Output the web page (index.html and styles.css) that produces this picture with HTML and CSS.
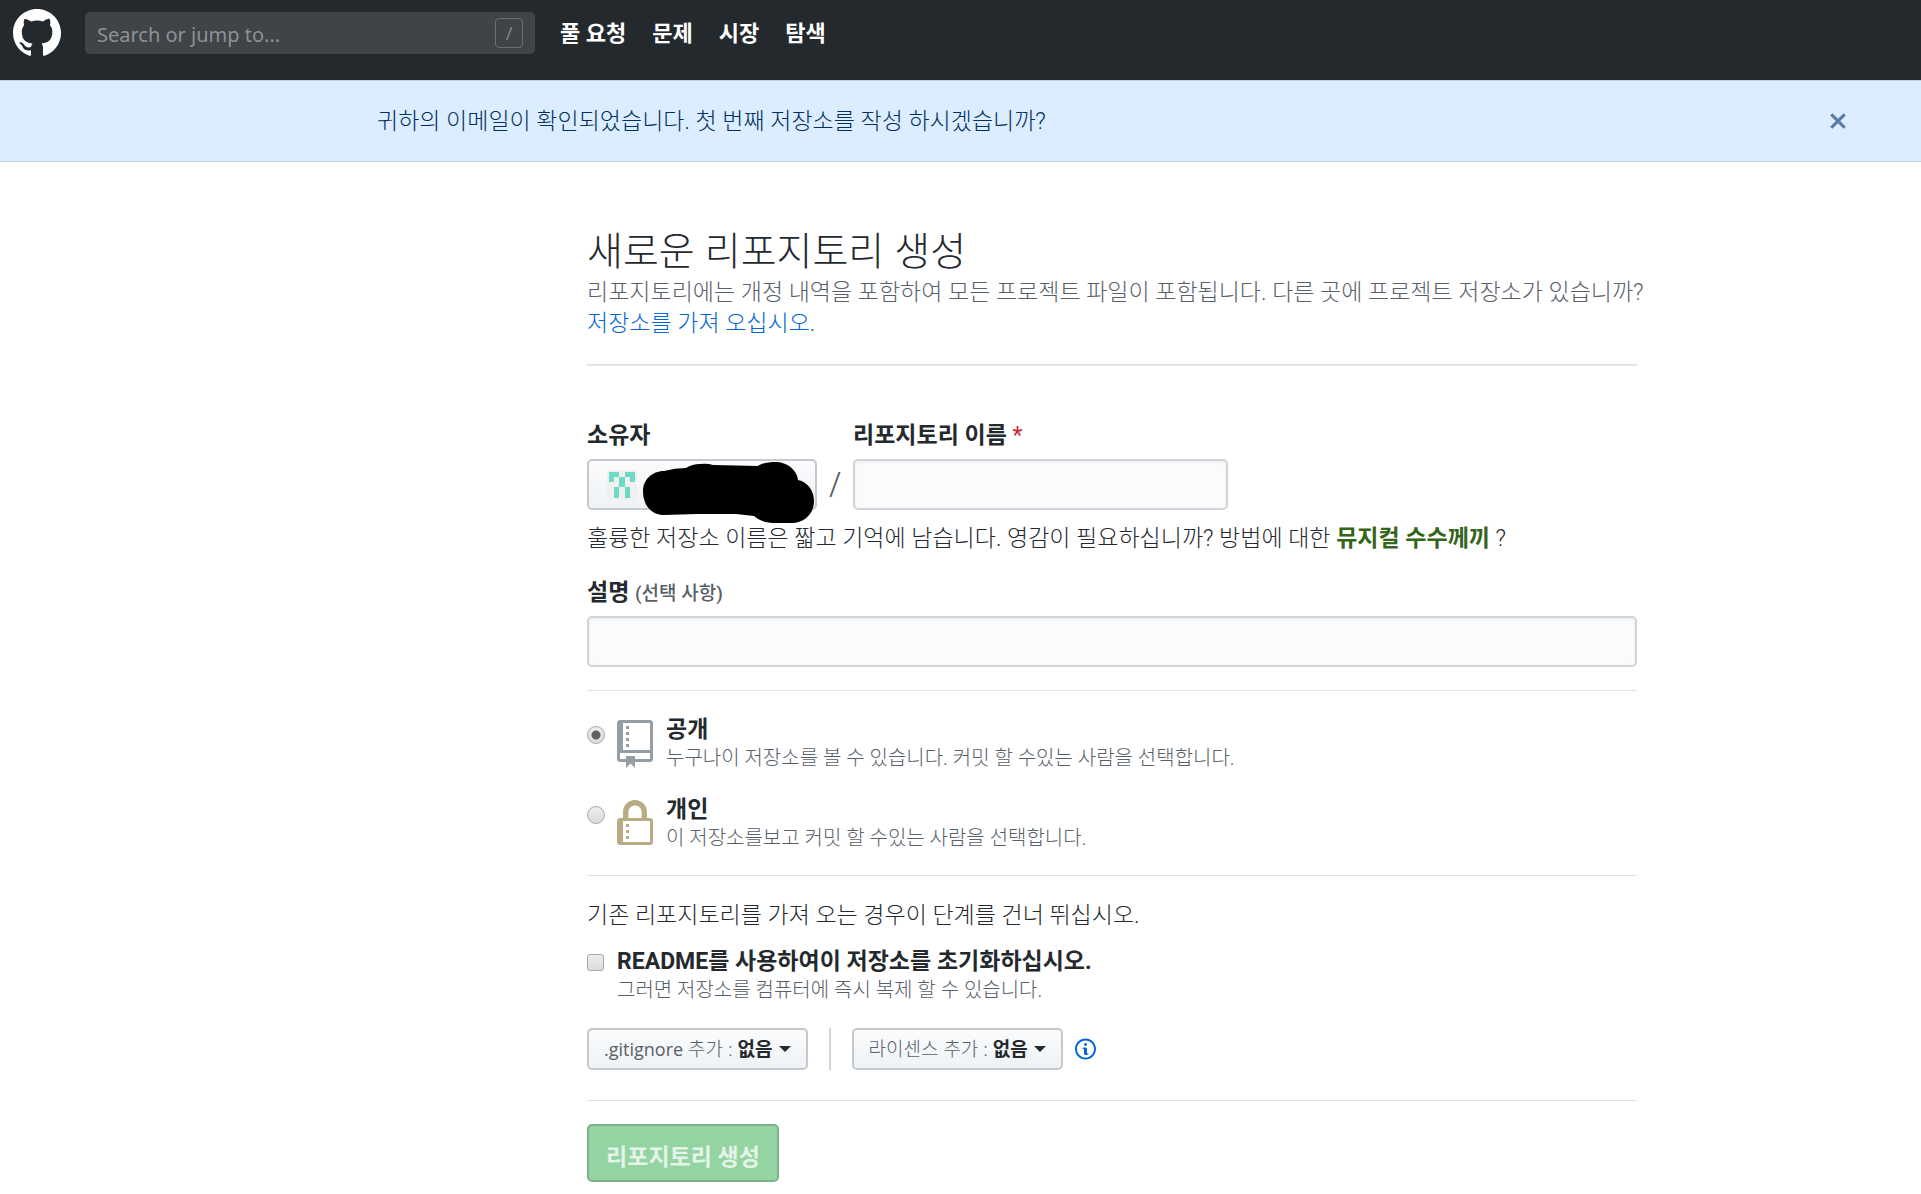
FILE: index.html
```html
<!DOCTYPE html>
<html lang="ko">
<head>
<meta charset="utf-8">
<meta name="viewport" content="width=device-width, initial-scale=1">
<title>새로운 리포지토리 생성</title>
<link rel="stylesheet" href="styles.css">
</head>
<body>
<header class="site-header">
  <a class="logo" href="#" aria-label="GitHub">
    <svg width="48" height="48" viewBox="0 0 16 16" fill="currentColor" aria-hidden="true"><path fill-rule="evenodd" d="M8 0C3.58 0 0 3.58 0 8c0 3.54 2.29 6.53 5.47 7.59.4.07.55-.17.55-.38 0-.19-.01-.82-.01-1.49-2.01.37-2.53-.49-2.69-.94-.09-.23-.48-.94-.82-1.13-.28-.15-.68-.52-.01-.53.63-.01 1.08.58 1.23.82.72 1.21 1.87.87 2.33.66.07-.52.28-.87.51-1.07-1.78-.2-3.64-.89-3.64-3.95 0-.87.31-1.59.82-2.15-.08-.2-.36-1.02.08-2.12 0 0 .67-.21 2.2.82.64-.18 1.32-.27 2-.27.68 0 1.36.09 2 .27 1.53-1.04 2.2-.82 2.2-.82.44 1.1.16 1.92.08 2.12.51.56.82 1.27.82 2.15 0 3.07-1.87 3.75-3.65 3.95.29.25.54.73.54 1.48 0 1.07-.01 1.93-.01 2.2 0 .21.15.46.55.38A8.013 8.013 0 0 0 16 8c0-4.42-3.58-8-8-8z"/></svg>
  </a>
  <label class="search">
    <input type="text" placeholder="Search or jump to..." aria-label="Search or jump to">
    <kbd class="slash-key">/</kbd>
  </label>
  <nav class="site-nav">
    <a href="#">풀 요청</a>
    <a href="#">문제</a>
    <a href="#">시장</a>
    <a href="#">탐색</a>
  </nav>
</header>

<div class="notice">
  <div class="notice-inner">
    <p>귀하의 이메일이 확인되었습니다. 첫 번째 저장소를 작성 하시겠습니까?</p>
    <button class="notice-close" type="button" aria-label="닫기">
      <svg width="18" height="24" viewBox="0 0 12 16" fill="currentColor" aria-hidden="true"><path d="M7.48 8l3.75 3.75-1.48 1.48L6 9.48l-3.75 3.75-1.48-1.48L4.52 8 .77 4.25l1.48-1.48L6 6.52l3.75-3.75 1.48 1.48L7.48 8z"/></svg>
    </button>
  </div>
</div>

<main class="page">
  <form class="new-repo">
    <div class="intro">
      <h1>새로운 리포지토리 생성</h1>
      <p>리포지토리에는 개정 내역을 포함하여 모든 프로젝트 파일이 포함됩니다. 다른 곳에 프로젝트 저장소가 있습니까?<br><a href="#">저장소를 가져 오십시오.</a></p>
    </div>

    <div class="identity">
      <div class="field">
        <label for="owner">소유자</label>
        <button class="btn owner" id="owner" type="button">
          <svg class="avatar" width="30" height="30" viewBox="0 0 30 30" aria-hidden="true"><rect width="30" height="30" rx="3" fill="#f0f0f0"/><path fill="#6cdac4" d="M2 2h10v5H7v5H2zM18 2h10v10h-5V7h-5zM12 7h6v10h5v11h-5V17h-6v11H7V17h5z"/></svg>
          <svg class="scribble" width="230" height="70" viewBox="0 0 230 70" aria-hidden="true"><path d="M56 32C56 21 65 12 77 12Q88 9 99 9Q105 5 113 5Q120 4 126 6L171 7C175 4 182 3 189 3C200 3 210 11 211 21C221 23 227 32 227 42C227 54 218 64 205 64H186C178 64 172 61 167 57Q158 56 149 55H110L77 56C65 56 56 47 56 32Z"/></svg>
        </button>
      </div>
      <span class="separator">/</span>
      <div class="field">
        <label for="name">리포지토리 이름 <span class="required">*</span></label>
        <input class="text-input name-input" id="name" type="text">
      </div>
    </div>
    <p class="hint">훌륭한 저장소 이름은 짧고 기억에 남습니다. 영감이 필요하십니까? 방법에 대한 <strong>뮤지컬 수수께끼</strong> ?</p>

    <div class="field">
      <label for="description">설명 <span class="optional">(선택 사항)</span></label>
      <input class="text-input" id="description" type="text">
    </div>

    <div class="section choices">
      <label class="choice">
        <input type="radio" name="visibility" checked>
        <svg class="repo-icon" width="36" height="48" viewBox="0 0 12 16" fill="currentColor" aria-hidden="true"><path fill-rule="evenodd" d="M4 9H3V8h1v1zm0-3H3v1h1V6zm0-2H3v1h1V4zm0-2H3v1h1V2zm8-1v12c0 .55-.45 1-1 1H6v2l-1.5-1.5L3 16v-2H1c-.55 0-1-.45-1-1V1c0-.55.45-1 1-1h10c.55 0 1 .45 1 1zm-1 10H1v2h2v-1h3v1h5v-2zm0-10H2v9h9V1z"/></svg>
        <span class="choice-text"><b>공개</b><small>누구나이 저장소를 볼 수 있습니다. 커밋 할 수있는 사람을 선택합니다.</small></span>
      </label>
      <label class="choice">
        <input type="radio" name="visibility">
        <svg class="lock-icon" width="36" height="48" viewBox="0 0 12 16" fill="currentColor" aria-hidden="true"><path fill-rule="evenodd" d="M4 13H3v-1h1v1zm8-6v7c0 .55-.45 1-1 1H1c-.55 0-1-.45-1-1V7c0-.55.45-1 1-1h1V4c0-2.2 1.8-4 4-4s4 1.8 4 4v2h1c.55 0 1 .45 1 1zM3.8 6h4.41V4c0-1.22-.98-2.2-2.2-2.2-1.22 0-2.2.98-2.2 2.2v2H3.8zM11 7H2v7h9V7zM4 8H3v1h1V8zm0 2H3v1h1v-1z"/></svg>
        <span class="choice-text"><b>개인</b><small>이 저장소를보고 커밋 할 수있는 사람을 선택합니다.</small></span>
      </label>
    </div>

    <div class="section setup">
      <p>기존 리포지토리를 가져 오는 경우이 단계를 건너 뛰십시오.</p>
      <label class="choice">
        <input type="checkbox">
        <span class="choice-text"><b>README를 사용하여이 저장소를 초기화하십시오.</b><small>그러면 저장소를 컴퓨터에 즉시 복제 할 수 있습니다.</small></span>
      </label>
      <div class="extras">
        <button class="btn menu" type="button"><span class="latin">.gitignore</span> 추가 : <b>없음</b><span class="caret"></span></button>
        <span class="divider"></span>
        <button class="btn menu" type="button">라이센스 추가 : <b>없음</b><span class="caret"></span></button>
        <a class="info" href="#" aria-label="라이센스 정보">
          <svg width="21" height="24" viewBox="0 0 14 16" fill="currentColor" aria-hidden="true"><path fill-rule="evenodd" d="M6.3 5.69a.942.942 0 0 1-.28-.7c0-.28.09-.52.28-.7.19-.18.42-.28.7-.28.28 0 .52.09.7.28.18.19.28.42.28.7 0 .28-.09.52-.28.7a1 1 0 0 1-.7.3c-.28 0-.52-.11-.7-.3zM8 7.99c-.02-.25-.11-.48-.31-.69-.2-.19-.42-.3-.69-.31H6c-.27.02-.48.13-.69.31-.2.2-.3.44-.31.69h1v3c.02.27.11.5.31.69.2.2.42.31.69.31h1c.27 0 .48-.11.69-.31.2-.19.3-.42.31-.69H8V7.98v.01zM7 2.3c-3.14 0-5.7 2.54-5.7 5.68 0 3.14 2.56 5.7 5.7 5.7s5.7-2.55 5.7-5.7c0-3.15-2.56-5.69-5.7-5.69v.01zM7 .98c3.86 0 7 3.14 7 7s-3.14 7-7 7-7-3.12-7-7 3.14-7 7-7z"/></svg>
        </a>
      </div>
    </div>

    <div class="section submit">
      <button class="btn-primary" type="submit" disabled>리포지토리 생성</button>
    </div>
  </form>
</main>
</body>
</html>
```
FILE: styles.css
```css
*, *::before, *::after { box-sizing: border-box; }

body {
  margin: 0;
  background: #fff;
  color: #24292e;
  font-family: Roboto, "Noto Sans CJK KR", sans-serif;
  font-size: 23px;
  font-weight: 300;
  line-height: 31px;
}

h1, p { margin: 0; font-weight: 300; }
a { color: #0366d6; text-decoration: none; }
button, input { font: inherit; color: inherit; }
svg { display: block; flex: none; }
b, strong { font-weight: 700; }

.site-header {
  display: flex;
  align-items: flex-start;
  height: 80px;
  padding: 9px 13px;
  background: #24292e;
}
.logo { color: #fff; }
.search {
  display: flex;
  align-items: center;
  width: 450px;
  height: 42px;
  margin: 3px 25px 0 24px;
  padding: 0 12px;
  border-radius: 5px;
  background: #404448;
}
.search input {
  flex: 1;
  min-width: 0;
  padding: 2px 0 0;
  border: 0;
  outline: 0;
  background: none;
  font-family: "Noto Sans", sans-serif;
  font-size: 20px;
  font-weight: 400;
}
.search input::placeholder { color: #8e9193; opacity: 1; }
.slash-key {
  width: 28px;
  height: 30px;
  border: 1px solid #6c7073;
  border-radius: 4px;
  color: #9fa2a4;
  font: 300 18px/28px "Noto Sans", sans-serif;
  text-align: center;
}
.site-nav { display: flex; gap: 26px; padding-top: 9px; }
.site-nav a { color: #fff; font-size: 22px; font-weight: 700; line-height: 31px; }

.notice, .page { padding-left: 303px; }
.notice {
  border: solid #c0d0e1;
  border-width: 1px 0;
  background: #dbedff;
  color: #032f62;
}
.notice-inner {
  display: flex;
  align-items: center;
  justify-content: space-between;
  max-width: 1470px;
  height: 80px;
  margin: 0 auto;
}
.notice-close {
  padding: 0;
  border: 0;
  background: none;
  color: #5b7ba6;
}

.new-repo { max-width: 1050px; margin: 0 auto; padding: 66px 0 13px; }
.intro { padding-bottom: 25px; border-bottom: 2px solid #e1e4e8; }
.intro h1 {
  margin-bottom: 5px;
  font-family: "Noto Sans", "Noto Sans CJK KR", sans-serif;
  font-size: 39px;
  line-height: 44px;
}
.intro p { color: #586069; white-space: nowrap; }

.identity { display: flex; align-items: flex-end; margin-top: 54px; }
.field label { display: block; margin-bottom: 7px; font-weight: 700; line-height: 32px; }
.required { color: #cb2431; font-weight: 400; }
.optional { color: #586069; font-size: 19px; font-weight: 500; line-height: 28px; }
.separator {
  width: 36px;
  color: #586069;
  font: 300 34px/51px "Noto Sans", sans-serif;
  text-align: center;
}
.btn {
  border: 2px solid #c5c9cd;
  border-radius: 5px;
  background: linear-gradient(#fafbfc, #eff3f6);
}
.owner {
  position: relative;
  display: block;
  width: 230px;
  height: 51px;
  padding: 0 18px;
}
.scribble { position: absolute; top: -2px; left: -2px; }
.text-input {
  display: block;
  width: 100%;
  height: 51px;
  padding: 0 12px;
  border: 2px solid #d1d5da;
  border-radius: 5px;
  background: #fafbfc;
  box-shadow: inset 0 1px 3px rgba(27, 31, 35, .08);
}
.name-input { width: 375px; }
.hint { margin: 13px 0 23px; }
.hint strong { color: #35641b; }

.section { border-top: 1px solid #dfe2e5; }
.choices { display: grid; gap: 23px; margin-top: 23px; padding: 24px 0 23px; }
.choice { display: flex; align-items: flex-start; }
.choice-text { display: grid; }
.choice b { line-height: 29px; }
.choice small { color: #586069; font-size: 20px; line-height: 28px; }
.choice svg { margin: 5px 13px -5px 12px; }
.repo-icon { color: #959da5; }
.lock-icon { color: #b9ab83; }

.choice input {
  flex: none;
  appearance: none;
  border: 1px solid #a9a9a9;
  background: linear-gradient(#ececec, #dcdcdc);
}
.choice input[type="radio"] { width: 18px; height: 18px; margin: 11px 0 0; border-radius: 50%; }
.choice input[type="radio"]:checked {
  background: radial-gradient(circle, #606060 4px, transparent 5px), linear-gradient(#ececec, #dcdcdc);
}
.choice input[type="checkbox"] { width: 17px; height: 17px; margin: 7px 13px 0 0; border-radius: 3px; }

.setup { padding: 24px 0 30px; }
.setup p { margin-bottom: 16px; }
.extras { display: flex; align-items: center; margin-top: 24px; }
.menu {
  display: flex;
  align-items: center;
  height: 42px;
  padding: 0 15px;
  color: #586069;
  font-family: "Noto Sans", "Noto Sans CJK KR", sans-serif;
  font-size: 19px;
  white-space: pre;
}
.menu b { color: #24292e; }
.latin { font-family: "Open Sans", sans-serif; font-size: 18px; font-weight: 400; }
.caret {
  margin-left: 6px;
  border: 6px solid transparent;
  border-top-color: #24292e;
  border-bottom: 0;
}
.divider { width: 2px; height: 42px; margin: 0 21px; background: #d1d5da; }
.info { margin-left: 12px; }

.submit { padding-top: 23px; }
.btn-primary {
  width: 192px;
  height: 58px;
  padding: 9px 0 0;
  border: 2px solid #7bb28a;
  border-radius: 5px;
  background: #94d3a2;
  color: #e4f4e8;
  font-weight: 700;
}
```
